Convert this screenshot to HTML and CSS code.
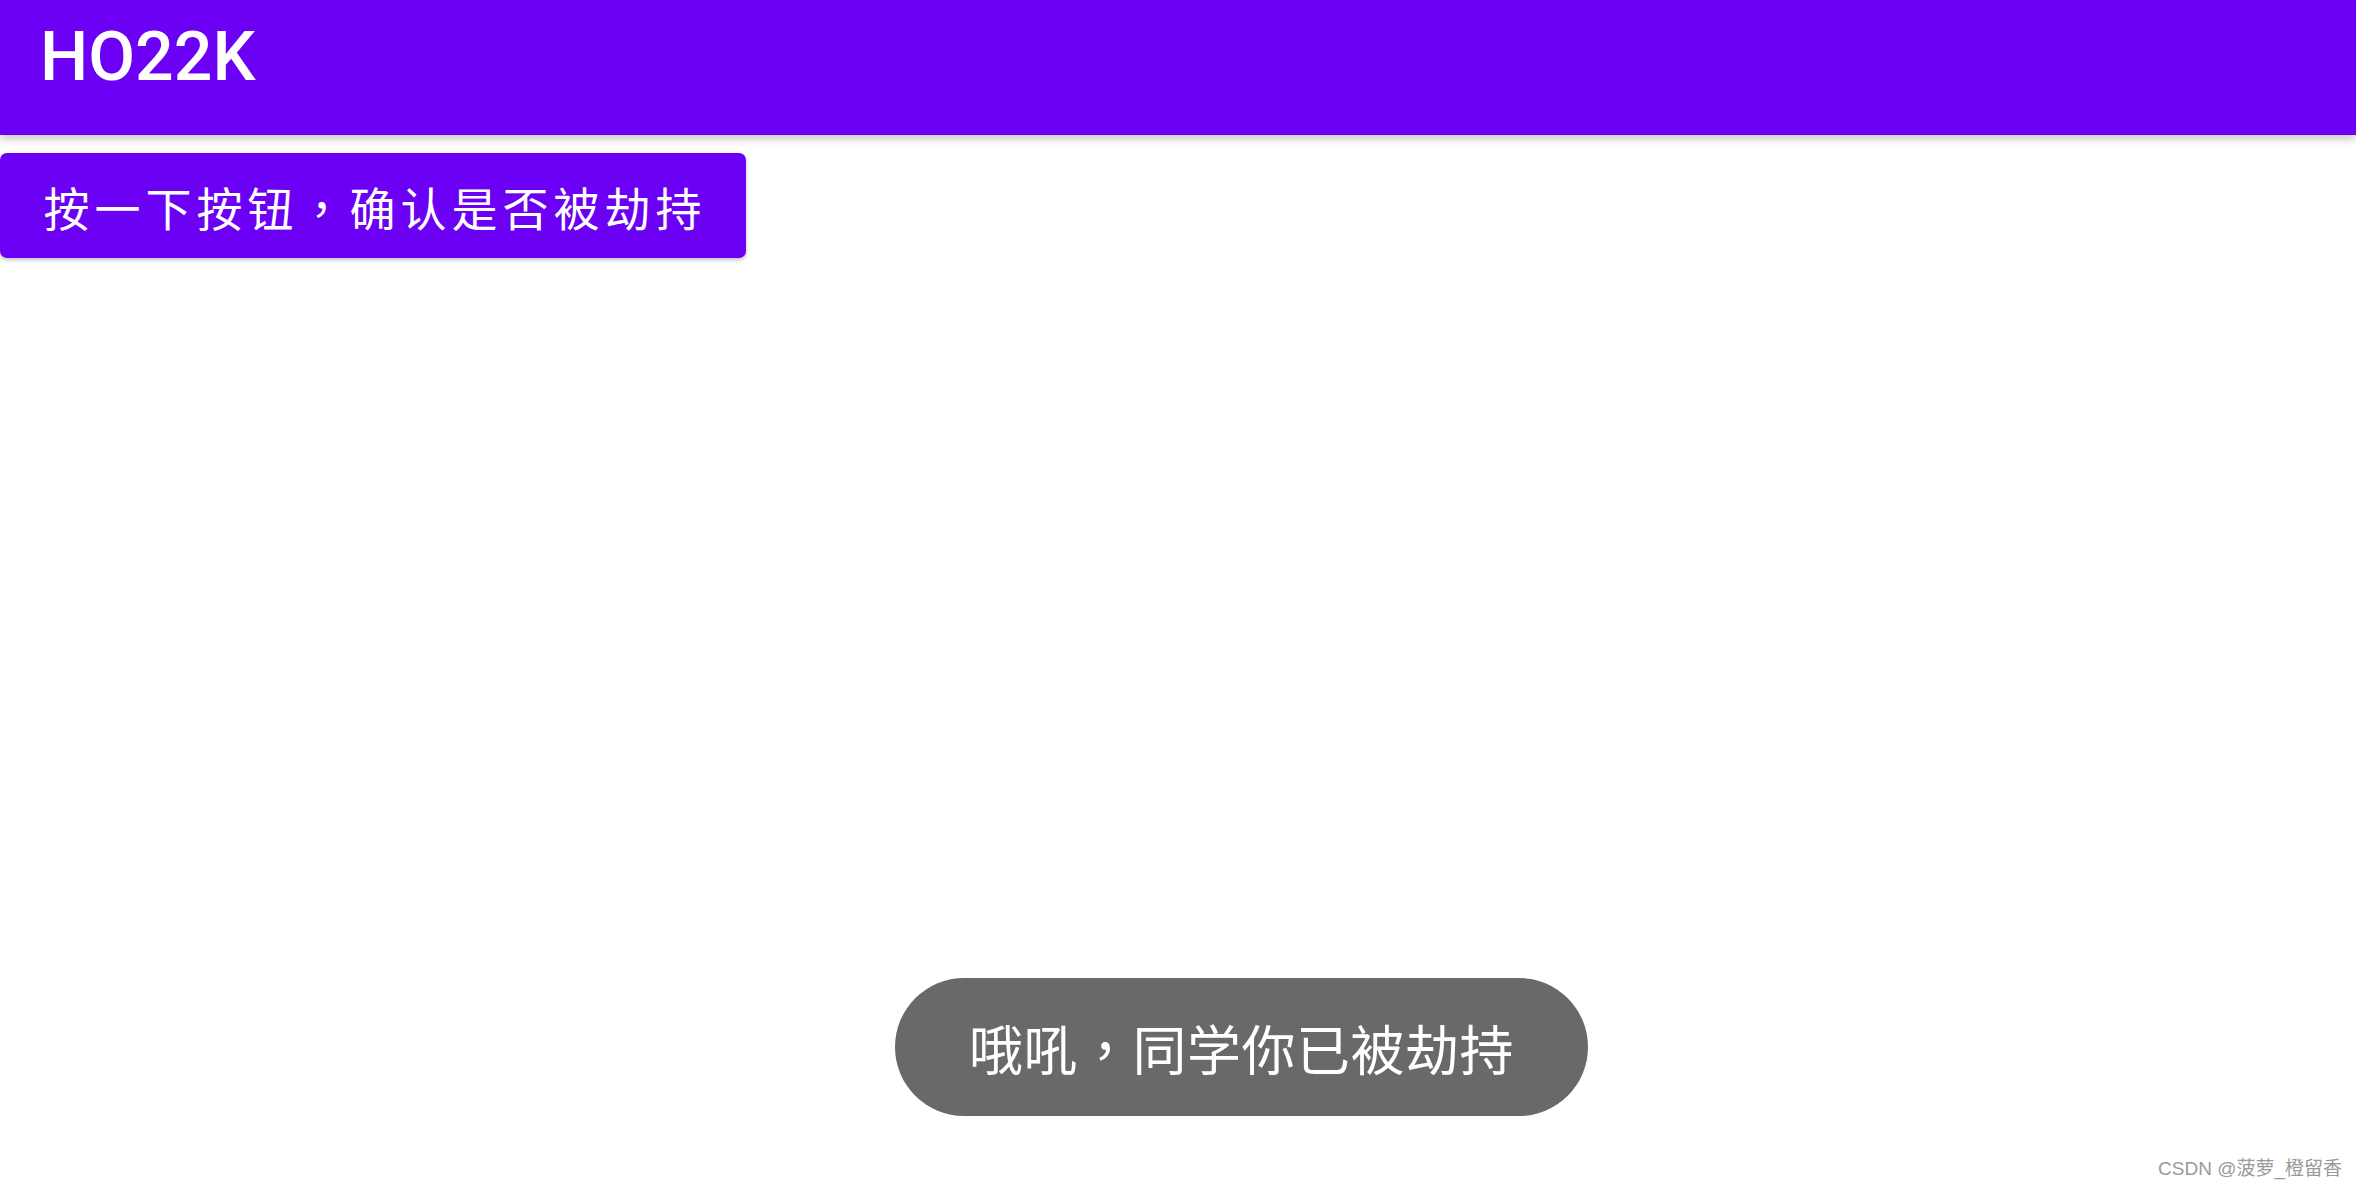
FILE: index.html
```html
<html>
    <head>
        <meta charset="utf-8">
        <link rel="stylesheet" href="styles.css">
    </head>
    <body>
        <div id="app">
            <div class="toolbar">
                <h1 class="title">HO22K</h1>
            </div>
            <div class="content">
                <button class="check-button">按一下按钮<span class="comma">，</span>确认是否被劫持</button>
            </div>
        </div>
        <div class="toast">哦吼<span class="comma">，</span>同学你已被劫持</div>
        <div class="watermark">CSDN @菠萝_橙留香</div>
    </body>
</html>
```

FILE: styles.css
```css
body, html {
    height: 100%;
    margin: 0;
    background: #ffffff;
    font-family: Roboto, "Noto Sans CJK SC", sans-serif;
}
#app {
    display: flex;
    flex-direction: column;
    height: 100%;
}
.toolbar {
    height: 135px;
    background: #6c00f4;
    display: flex;
    align-items: center;
    padding-left: 40px;
    box-shadow: 0 4px 8px rgba(0, 0, 0, 0.22);
    position: relative;
    z-index: 1;
}
.title {
    margin: 0;
    color: #ffffff;
    font-size: 68px;
    font-weight: 500;
    margin-top: -22px;
}
.content {
    padding-top: 18px;
}
.check-button {
    width: 746px;
    height: 105px;
    border: none;
    border-radius: 7px;
    background: #6c00f4;
    color: #ffffff;
    font-family: "Noto Sans CJK SC", sans-serif;
    font-size: 46px;
    letter-spacing: 5px;
    padding: 0 0 0 4px;
    box-shadow: 0 2px 4px rgba(0, 0, 0, 0.25);
}
.comma {
    font-family: "Noto Sans CJK TC", sans-serif;
}
.toast {
    position: absolute;
    left: 895px;
    top: 978px;
    width: 693px;
    height: 138px;
    border-radius: 69px;
    background: #696969;
    color: #ffffff;
    font-family: "Noto Sans CJK SC", sans-serif;
    font-size: 54px;
    letter-spacing: 0.5px;
    display: flex;
    align-items: center;
    justify-content: center;
}
.watermark {
    position: absolute;
    right: 14px;
    bottom: 8px;
    color: #9a9a9a;
    font-family: "Liberation Sans", "Noto Sans CJK SC", sans-serif;
    font-size: 19px;
}
```
